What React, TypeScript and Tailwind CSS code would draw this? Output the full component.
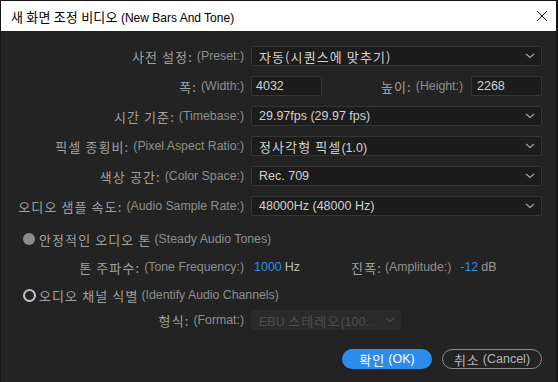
import React from "react";

const KR = { fontFamily: '"Noto Sans CJK KR", "Noto Sans", sans-serif' };
const EN = { fontFamily: '"Liberation Sans", "Noto Sans CJK KR", sans-serif' };

function Chevron({ dim }: { dim?: boolean }) {
  return (
    <svg width="10" height="6" viewBox="0 0 10 6" className="shrink-0">
      <path d="M1 1 L5 4.5 L9 1" fill="none" stroke={dim ? "#4a4a4a" : "#a8a8a8"} strokeWidth="1.1" />
    </svg>
  );
}

function Label({ ko, en, w = "w-[243px]" }: { ko: string; en: string; w?: string }) {
  return (
    <div className={`${w} shrink-0 flex justify-end items-center whitespace-nowrap`}>
      <span style={KR} className="text-[13px] tracking-[1.1px] text-[#a0a0a0] leading-none">{ko}</span>
      <span style={EN} className="text-[12.3px] text-[#8e8e8e] leading-none ml-[4px]">{en}</span>
    </div>
  );
}

function Select({ value, kr }: { value: string; kr?: boolean }) {
  return (
    <div className="ml-[7px] w-[291px] h-[20px] bg-[#1c1c1c] border border-[#353535] rounded-[2px] flex items-center justify-between pl-[7px] pr-[6px]">
      <span style={kr ? KR : EN} className={`${kr ? "text-[13px] tracking-[1.1px]" : "text-[12.5px]"} text-[#d2d2d2] leading-none`}>{value}</span>
      <Chevron />
    </div>
  );
}

export default function App() {
  return (
    <div className="w-[558px] h-[382px] bg-[#161616] pt-[1px] pl-[1px] overflow-hidden">
      <div className="w-[555px] h-[381px] bg-[#232323] flex flex-col">
        <div className="h-[30px] bg-white flex items-center justify-between pl-[10px] pr-[8px] shrink-0">
          <span className="text-black leading-none">
            <span style={KR} className="text-[13px] tracking-[0.2px]">새 화면 조정 비디오</span>
            <span style={EN} className="text-[12px]"> (New Bars And Tone)</span>
          </span>
          <svg width="12" height="12" viewBox="0 0 12 12">
            <path d="M1 1 L11 11 M11 1 L1 11" stroke="#111" strokeWidth="1" />
          </svg>
        </div>
        <div className="flex flex-col pt-[15px]">
          <div className="flex items-center h-[20px]">
            <Label ko="사전 설정:" en="(Preset:)" />
            <Select value="자동(시퀀스에 맞추기)" kr />
          </div>
          <div className="flex items-center h-[20px] mt-[10px]">
            <Label ko="폭:" en="(Width:)" />
            <div className="ml-[7px] w-[71px] h-[20px] bg-[#1c1c1c] border border-[#353535] rounded-[2px] flex items-center pl-[4px]">
              <span style={EN} className="text-[12.5px] text-[#d2d2d2] leading-none">4032</span>
            </div>
            <Label ko="높이:" en="(Height:)" w="w-[141px]" />
            <div className="ml-[8px] w-[71px] h-[20px] bg-[#1c1c1c] border border-[#353535] rounded-[2px] flex items-center pl-[5px]">
              <span style={EN} className="text-[12.5px] text-[#d2d2d2] leading-none">2268</span>
            </div>
          </div>
          <div className="flex items-center h-[20px] mt-[10px]">
            <Label ko="시간 기준:" en="(Timebase:)" />
            <Select value="29.97fps (29.97 fps)" />
          </div>
          <div className="flex items-center h-[20px] mt-[10px]">
            <Label ko="픽셀 종횡비:" en="(Pixel Aspect Ratio:)" />
            <div className="ml-[7px] w-[291px] h-[20px] bg-[#1c1c1c] border border-[#353535] rounded-[2px] flex items-center justify-between pl-[7px] pr-[6px]">
              <span className="leading-none text-[#d2d2d2]">
                <span style={KR} className="text-[13px] tracking-[1.1px]">정사각형 픽셀</span>
                <span style={EN} className="text-[12.5px]">(1.0)</span>
              </span>
              <Chevron />
            </div>
          </div>
          <div className="flex items-center h-[20px] mt-[10px]">
            <Label ko="색상 공간:" en="(Color Space:)" />
            <Select value="Rec. 709" />
          </div>
          <div className="flex items-center h-[20px] mt-[10px]">
            <Label ko="오디오 샘플 속도:" en="(Audio Sample Rate:)" />
            <Select value="48000Hz (48000 Hz)" />
          </div>
          <div className="flex items-center h-[20px] mt-[13px] pl-[22px]">
            <div className="w-[12px] h-[12px] rounded-full bg-[#8c8c8c]" />
            <span style={KR} className="ml-[4px] text-[13px] tracking-[1.1px] text-[#a0a0a0] leading-none">안정적인 오디오 톤</span>
            <span style={EN} className="ml-[3px] text-[12.3px] text-[#8e8e8e] leading-none">(Steady Audio Tones)</span>
          </div>
          <div className="flex items-center h-[20px] mt-[8px]">
            <Label ko="톤 주파수:" en="(Tone Frequency:)" />
            <span style={EN} className="ml-[10px] text-[12.5px] text-[#2d8ceb] leading-none">1000</span>
            <span style={EN} className="ml-[3px] text-[12.5px] text-[#bdbdbd] leading-none">Hz</span>
            <span style={KR} className="ml-[51px] text-[13px] tracking-[1.1px] text-[#a0a0a0] leading-none">진폭:</span>
            <span style={EN} className="ml-[3px] text-[12.3px] text-[#8e8e8e] leading-none">(Amplitude:)</span>
            <span style={EN} className="ml-[9px] text-[12.5px] text-[#2d8ceb] leading-none">-12</span>
            <span style={EN} className="ml-[3px] text-[12.5px] text-[#9a9a9a] leading-none">dB</span>
          </div>
          <div className="flex items-center h-[20px] mt-[8px] pl-[22px]">
            <div className="w-[13px] h-[13px] rounded-full border-[2px] border-[#c4c4c4]" />
            <span style={KR} className="ml-[3px] text-[13px] tracking-[1.1px] text-[#a0a0a0] leading-none">오디오 채널 식별</span>
            <span style={EN} className="ml-[3px] text-[12.3px] text-[#8e8e8e] leading-none">(Identify Audio Channels)</span>
          </div>
          <div className="flex items-center h-[20px] mt-[5px]">
            <Label ko="형식:" en="(Format:)" />
            <div className="ml-[7px] w-[150px] h-[20px] bg-[#2a2a2a] rounded-[2px] flex items-center justify-between pl-[8px] pr-[6px]">
              <span className="leading-none text-[#4e4e4e]">
                <span style={EN} className="text-[12.5px]">EBU </span>
                <span style={KR} className="text-[13px] tracking-[1.1px]">스테레오</span>
                <span style={EN} className="text-[12.5px]">(100...</span>
              </span>
              <Chevron dim />
            </div>
          </div>
          <div className="flex items-center justify-end h-[20px] mt-[19px] pr-[14px]">
            <div className="w-[90px] h-[20px] rounded-full bg-[#2d8ceb] flex items-center justify-center">
              <span style={KR} className="text-[13px] tracking-[1px] text-white leading-none">확인</span>
              <span style={EN} className="ml-[3px] text-[12.5px] text-white leading-none">(OK)</span>
            </div>
            <div className="ml-[10px] w-[100px] h-[20px] rounded-full border border-[#8a8a8a] flex items-center justify-center">
              <span style={KR} className="text-[13px] tracking-[1px] text-[#b4b4b4] leading-none">취소</span>
              <span style={EN} className="ml-[3px] text-[12.5px] text-[#b4b4b4] leading-none">(Cancel)</span>
            </div>
          </div>
        </div>
      </div>
    </div>
  );
}
